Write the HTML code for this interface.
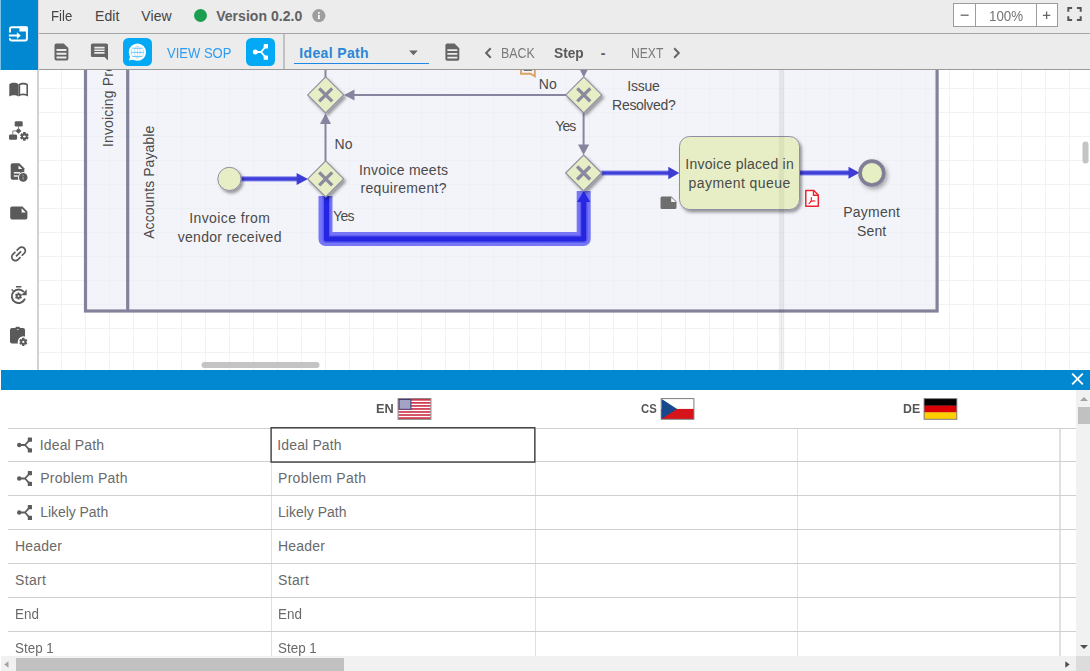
<!DOCTYPE html>
<html lang="en">
<head>
<meta charset="utf-8">
<title>Process Editor</title>
<style>
*{box-sizing:border-box}
html,body{margin:0;padding:0}
body{width:1090px;height:671px;overflow:hidden;position:relative;background:#fff;font-family:"Liberation Sans",sans-serif;font-size:14px;color:#4a4a4a}
.abs{position:absolute}
.t{position:absolute;white-space:nowrap;line-height:16px;height:16px}
#side{left:0;top:0;width:39px;height:370px;background:#fff;border-right:2px solid #d2d2d2}
#sidehead{left:0;top:0;width:37.500px;height:69.5px;background:#0288d1;border-left:1px solid #7cc3ea}
#topbar{left:39px;top:0;width:1051px;height:34px;background:#ececec;border-bottom:1px solid #a6a6a6}
#toolbar{left:39px;top:34px;width:1051px;height:36px;background:#ececec;border-bottom:1px solid #9a9a9a}
#canvas{left:39px;top:70px;width:1051px;height:300px;overflow:hidden;background-color:#fff;
 background-image:linear-gradient(to right,#f2f2f2 1px,transparent 1px),linear-gradient(to bottom,#f2f2f2 1px,transparent 1px);
 background-size:24px 24px;background-position:-2px -6px}
#bluebar{left:1px;top:370px;width:1089px;height:20px;background:#0288d1}
#table{left:0;top:390px;width:1076px;height:266px;overflow:hidden;background:#fff}
.row{position:absolute;left:8px;width:1068px;height:1px;background:#cfcfcf}
.col{position:absolute;top:38px;height:228px;width:1.5px;background:#e0e0e0}
.cell{position:absolute;white-space:nowrap;line-height:16px;height:16px;color:#666;font-size:14px}
.hd{position:absolute;white-space:nowrap;font-weight:bold;font-size:13px;line-height:16px;color:#555}
#vscroll{left:1076px;top:390px;width:14px;height:266px;background:#f1f1f1}
#hscroll{left:1px;top:656px;width:1075px;height:15px;background:#f1f1f1}
#corner{left:1076px;top:656px;width:14px;height:15px;background:#dcdcdc}
.btn{position:absolute;width:28.5px;height:28.3px;border-radius:5.5px;background:#03a9f4}
</style>
</head>
<body>
<!-- SIDEBAR -->
<div id="side" class="abs"></div>
<div id="sidehead" class="abs"></div>
<svg class="abs" style="left:0;top:0" width="38" height="370" viewBox="0 0 38 370">
<!-- active: open-in-tab icon -->
<g fill="none" stroke="#fff" stroke-width="2" stroke-linecap="butt">
<path d="M10 32.500V29a1.700 1.700 0 0 1 1.700-1.700H25.200a1.700 1.700 0 0 1 1.700 1.700V38.800a1.700 1.700 0 0 1-1.700 1.700H11.700A1.700 1.700 0 0 1 10 38.800V38.300"/>
</g>
<rect x="19.400" y="26.500" width="8.300" height="5" fill="#fff"/>
<path d="M8.900 34.600h8v-2.400l3.900 3.400-3.900 3.400v-2.400h-8z" fill="#fff"/>
<g fill="#5a5a5a" stroke="none">
<!-- book -->
<path d="M9.300 84.200C12 82.300 16 82.300 18.600 84.200V96.400C16 94.700 12 94.700 9.300 96.400Z"/>
<path d="M18.600 84.200C21.200 82.300 25.200 82.300 28 84.200V96.400C25.200 94.700 21.200 94.700 18.600 96.400Z M20.200 85.100V93.900C22.200 93.200 24.400 93.200 26.400 93.900V85.100C24.400 84.300 22.200 84.300 20.200 85.100Z" fill-rule="evenodd"/>
<!-- flow + gear -->
<rect x="14.700" y="121.200" width="8" height="5.400" rx="1.400"/>
<path d="M18.500 128l2.900 2.900-2.900 2.900-2.900-2.900z"/><path d="M18.500 126v3" stroke="#777" stroke-width=".8"/>
<rect x="9" y="134.600" width="8.100" height="5.200" rx="1.400"/>
<path d="M16 130.900H12.800V135" fill="none" stroke="#777" stroke-width=".9"/>
<path d="M25.880 139.120L25.560 140.750L23.240 140.750L22.920 139.120L22.780 139.040L21.220 139.580L20.050 137.560L21.300 136.480L21.300 136.320L20.050 135.240L21.220 133.220L22.780 133.760L22.920 133.680L23.240 132.050L25.560 132.050L25.880 133.680L26.020 133.760L27.580 133.220L28.750 135.240L27.500 136.320L27.500 136.480L28.750 137.560L27.580 139.580L26.020 139.040Z"/>
<ellipse cx="24.400" cy="136.400" rx="1.400" ry="1" fill="#fff"/>
<!-- doc + info -->
<path d="M12.500 163.200h6.800l5 5.100v9.700a1.800 1.800 0 0 1-1.800 1.800H12.500a1.800 1.800 0 0 1-1.800-1.800V165a1.800 1.800 0 0 1 1.800-1.800z"/>
<path d="M18.500 165.400v3.700h3.800z" fill="#fff"/>
<rect x="13.800" y="172.100" width="6.400" height="1.400" fill="#fff"/>
<rect x="13.800" y="175.300" width="4" height="1.400" fill="#fff"/>
<circle cx="23.200" cy="177.400" r="5.300" fill="#fff"/>
<circle cx="23.200" cy="177.400" r="4.300"/>
<rect x="22.600" y="176.700" width="1.200" height="3" fill="#9a9a9a"/>
<rect x="22.600" y="174.700" width="1.200" height="1.200" fill="#9a9a9a"/>
<!-- note -->
<path d="M12 206.500h10.500l4.900 4.900v6.400a1.800 1.800 0 0 1-1.800 1.800H12a1.800 1.800 0 0 1-1.800-1.800v-9.500a1.800 1.800 0 0 1 1.800-1.800z"/>
<path d="M21.600 208.200v4.300h4.300z" fill="#fff"/>
<!-- link -->
<path transform="translate(18.550 253.850) rotate(-45) scale(.89) translate(-12 -12)" d="M3.900 12c0-1.710 1.390-3.100 3.100-3.100h4V7H7c-2.760 0-5 2.240-5 5s2.240 5 5 5h4v-1.900H7c-1.710 0-3.100-1.390-3.100-3.100zM8 13h8v-2H8v2zm9-6h-4v1.900h4c1.710 0 3.100 1.390 3.100 3.100s-1.390 3.100-3.100 3.100h-4V17h4c2.760 0 5-2.240 5-5s-2.240-5-5-5z"/>
<!-- timer refresh cog -->
<rect x="15.900" y="286" width="5.500" height="1.600" rx=".5"/>
<path d="M23.770 291.960A6.750 6.750 0 1 0 24.940 298.610" fill="none" stroke="#5a5a5a" stroke-width="1.900"/>
<path d="M26.700 289.200V295.200H21.200Z"/>
<path d="M11.600 289.400l1.900 1.500" stroke="#5a5a5a" stroke-width="1.300"/>
<path d="M19.65 298.21L19.43 299.58L17.57 299.58L17.35 298.21L17.25 298.15L15.95 298.65L15.02 297.03L16.10 296.16L16.10 296.04L15.02 295.17L15.95 293.55L17.25 294.05L17.35 293.99L17.57 292.62L19.43 292.62L19.65 293.99L19.75 294.05L21.05 293.55L21.98 295.17L20.90 296.04L20.90 296.16L21.98 297.03L21.05 298.65L19.75 298.15Z"/>
<circle cx="18.500" cy="296.100" r=".9" fill="#fff"/>
<!-- clipboard cog -->
<rect x="10" y="327.900" width="15" height="15.500" rx="2"/>
<rect x="15.200" y="326.700" width="5" height="3" rx="1.500"/>
<ellipse cx="17.800" cy="329.500" rx="1" ry=".6" fill="#ddd"/>
<circle cx="23.300" cy="341.900" r="5.600" fill="#fff"/>
<path d="M24.68 344.45L24.39 345.96L22.21 345.96L21.92 344.45L21.78 344.37L20.33 344.87L19.24 342.99L20.40 341.98L20.40 341.82L19.24 340.81L20.33 338.93L21.78 339.43L21.92 339.35L22.21 337.84L24.39 337.84L24.68 339.35L24.82 339.43L26.27 338.93L27.36 340.81L26.20 341.82L26.20 341.98L27.36 342.99L26.27 344.87L24.82 344.37Z"/>
<circle cx="23.300" cy="341.900" r="1.100" fill="#fff"/>
</g>
</svg>

<!-- TOPBAR -->
<div id="topbar" class="abs"></div>
<div id="toolbar" class="abs"></div>
<div class="abs" style="left:194.200px;top:9px;width:13px;height:13px;border-radius:50%;background:#1b9e50"></div>
<svg class="abs" style="left:311.500px;top:9px" width="14" height="14" viewBox="0 0 14 14"><circle cx="6.800" cy="6.600" r="6.600" fill="#9e9e9e"/><rect x="6" y="5.800" width="1.700" height="4.300" fill="#fff"/><rect x="6" y="3" width="1.700" height="1.700" fill="#fff"/></svg>
<div class="abs" style="left:953px;top:2.500px;width:105px;height:24.500px;background:#fff;border:1.500px solid #9c9c9c"></div>
<div class="abs" style="left:974.500px;top:3px;width:1.500px;height:23.500px;background:#9c9c9c"></div>
<div class="abs" style="left:1035.500px;top:3px;width:1.500px;height:23.500px;background:#9c9c9c"></div>
<svg class="abs" style="left:953px;top:0" width="137" height="34" viewBox="953 0 137 34">
<path d="M960.600 15.200h8" stroke="#666" stroke-width="1.300"/>
<path d="M1042.900 15.300h7.400M1046.600 11.600v7.400" stroke="#666" stroke-width="1.300"/>
<path d="M1068.300 11.700v-3.800h3.800M1076.900 7.900h3.800v3.800M1080.700 16.200v3.800h-3.800M1072.100 20h-3.800v-3.800" fill="none" stroke="#555" stroke-width="2"/>
</svg>
<span class="t" style="left:51.0px;top:8.0px;font-size:14px;font-weight:normal;color:#444;letter-spacing:0.00px;transform:scaleX(0.940);transform-origin:0 0">File</span>
<span class="t" style="left:95.0px;top:8.0px;font-size:14px;font-weight:normal;color:#444;letter-spacing:0.06px">Edit</span>
<span class="t" style="left:141.3px;top:8.0px;font-size:14px;font-weight:normal;color:#444;letter-spacing:0.07px">View</span>
<span class="t" style="left:216.2px;top:8.0px;font-size:14px;font-weight:bold;color:#616161;letter-spacing:0.04px">Version 0.2.0</span>
<span class="t" style="left:988.9px;top:7.7px;font-size:14px;font-weight:normal;color:#757575;letter-spacing:0.00px;transform:scaleX(0.952);transform-origin:0 0">100%</span>

<span class="t" style="left:166.8px;top:44.8px;font-size:14px;font-weight:normal;color:#2e9cf2;letter-spacing:0.00px;transform:scaleX(0.930);transform-origin:0 0">VIEW SOP</span>
<span class="t" style="left:299.3px;top:44.6px;font-size:14px;font-weight:bold;color:#2a87d6;letter-spacing:0.36px">Ideal Path</span>
<span class="t" style="left:501.2px;top:44.7px;font-size:14px;font-weight:normal;color:#7a7a7a;letter-spacing:0.00px;transform:scaleX(0.887);transform-origin:0 0">BACK</span>
<span class="t" style="left:553.8px;top:44.7px;font-size:14px;font-weight:bold;color:#5a5a5a;letter-spacing:0.00px;transform:scaleX(0.979);transform-origin:0 0">Step</span>
<span class="t" style="left:600.8px;top:44.7px;font-size:14px;font-weight:bold;color:#5a5a5a;letter-spacing:0.00px">-</span>
<span class="t" style="left:630.8px;top:44.7px;font-size:14px;font-weight:normal;color:#7a7a7a;letter-spacing:0.00px;transform:scaleX(0.865);transform-origin:0 0">NEXT</span>
<div class="btn" style="left:123.200px;top:37.800px"></div>
<div class="btn" style="left:246.300px;top:37.800px"></div>
<div class="abs" style="left:283px;top:34px;width:2px;height:35px;background:#c2c2c2"></div>
<div class="abs" style="left:293.500px;top:62.700px;width:135px;height:1.500px;background:#1e88e5"></div>
<svg class="abs" style="left:38px;top:34px" width="700" height="36" viewBox="38 34 700 36">
<defs><g id="docic"><path d="M1.800 0h7.400l4.700 4.700v10.700a1.800 1.800 0 0 1-1.800 1.800H1.800a1.800 1.800 0 0 1-1.800-1.800V1.800a1.800 1.800 0 0 1 1.800-1.800z" fill="#666"/><path d="M2 6.600h9.900M2 10.400h9.900M2 14.100h9.900" stroke="#ececec" stroke-width="1.900"/></g></defs>
<use href="#docic" x="54.500" y="43.400"/>
<use href="#docic" x="445.400" y="43.500"/>
<path transform="translate(89.200 41.700) scale(.855)" fill="#666" d="M21.990 4c0-1.100-.890-2-1.990-2H4c-1.100 0-2 .9-2 2v12c0 1.100.9 2 2 2h14l4 4-.01-18zM18 14H6v-2h12v2zm0-3H6V9h12v2zm0-3H6V6h12v2z"/>
<!-- globe chat -->
<circle cx="137.400" cy="52.200" r="8.600" fill="#fff"/>
<path d="M130.200 56.500l-1.300 3.900 5.400-.9z" fill="#fff"/>
<g fill="none" stroke="#9bdafa" stroke-width=".75">
<ellipse cx="137.400" cy="52.200" rx="2.800" ry="6.200"/>
<path d="M137.400 46v12.400"/>
<path d="M133.200 47.300c-2.600 2.800-2.600 7 0 9.800M141.600 47.300c2.600 2.800 2.600 7 0 9.800"/>
</g>
<path d="M131.400 52.450h12M132.600 48.300h9.600M132.600 56.500h9.600" fill="none" stroke="#5cc4f7" stroke-width=".9"/>
<!-- share -->
<path d="M265.850 46.250L261.100 52L265.850 57.700M255.350 52H261.100" stroke="#fff" stroke-width="1.800" fill="none" stroke-linejoin="round"/>
<circle cx="255.350" cy="52" r="2.500" fill="#fff"/>
<rect x="263.700" y="44.100" width="4.300" height="4.300" rx=".6" fill="#fff"/>
<rect x="263.700" y="55.550" width="4.300" height="4.300" rx=".6" fill="#fff"/>
<!-- caret -->
<path d="M409.100 50.600h8.700l-4.350 4.700z" fill="#666"/>
<!-- chevrons -->
<path d="M490.700 48.200l-4.600 4.800 4.600 4.800" fill="none" stroke="#666" stroke-width="2"/>
<path d="M674.200 48.200l4.600 4.800-4.600 4.800" fill="none" stroke="#666" stroke-width="2"/>
</svg>

<!-- CANVAS -->
<div id="canvas" class="abs">
<svg id="diagram" class="abs" style="left:-39px;top:-70px" width="1090" height="671" viewBox="0 0 1090 671" font-family="Liberation Sans, sans-serif" font-size="14" fill="#4a4a4a">
<defs>
<filter id="sh" x="-30%" y="-30%" width="170%" height="170%"><feDropShadow dx="2" dy="2.5" stdDeviation="1.6" flood-color="#000" flood-opacity=".38"/></filter>
<filter id="sh2" x="-40%" y="-40%" width="190%" height="190%"><feDropShadow dx="2" dy="2.500" stdDeviation="2.200" flood-color="#000" flood-opacity=".32"/></filter>
<g id="gw"><path d="M0 -18L18 0L0 18L-18 0Z" fill="#e7eec5" stroke="#8f8fa3" stroke-width="1.2" filter="url(#sh)"/><path d="M-6.500 -6.500L6.500 6.500M6.500 -6.500L-6.500 6.500" stroke="#8a8a9e" stroke-width="3.300" fill="none"/></g>
</defs>
<!-- pool -->
<rect x="85.500" y="-120" width="851.600" height="431" fill="#eeeff6" fill-opacity=".7" stroke="#82829a" stroke-width="3.200"/>
<line x1="127.700" y1="60" x2="127.700" y2="311" stroke="#82829a" stroke-width="3.200"/>
<!-- splitter band -->
<rect x="778.700" y="70" width="5.600" height="300" fill="#000" fill-opacity=".05"/>
<line x1="780" y1="70" x2="780" y2="370" stroke="#000" stroke-opacity=".015" stroke-width="1"/>
<line x1="783.500" y1="70" x2="783.500" y2="370" stroke="#000" stroke-opacity=".03" stroke-width="1"/>
<!-- lane labels -->
<text transform="translate(112.600,147.100) rotate(-90)" textLength="112.500" lengthAdjust="spacing">Invoicing Process</text>
<text transform="translate(154.400,238.800) rotate(-90)" textLength="113" lengthAdjust="spacing">Accounts Payable</text>
<!-- thick ideal path -->
<path d="M325.500 196V239H583.700V191" fill="none" stroke="#7676f7" stroke-width="14" stroke-linejoin="round"/>
<path d="M326.300 196V239H583.700V200" fill="none" stroke="#5c5cf1" stroke-width="8" stroke-linejoin="round"/>
<path d="M326.500 196V239H583.700V200" fill="none" stroke="#2424e1" stroke-width="5" stroke-linejoin="round"/>
<path d="M583.700 191L590.300 202H577.100Z" fill="#2828e2"/>
<!-- grey flows -->
<g stroke="#8585a0" stroke-width="2" fill="none">
<line x1="325.500" y1="60" x2="325.500" y2="78"/>
<line x1="325.500" y1="161.500" x2="325.500" y2="123"/>
<line x1="566" y1="95" x2="354" y2="95"/>
<line x1="583.600" y1="112" x2="583.600" y2="145"/>
</g>
<g fill="#8585a0">
<path d="M325.500 113.500L331 124H320Z"/>
<path d="M344 95L354.500 89.500V100.500Z"/>
<path d="M583.600 155L578 144.500H589.200Z"/>
<path d="M583.800 77.500L579 68H588.600Z"/>
</g>
<!-- blue flows -->
<g stroke="#8a8aee" stroke-width="5.200" fill="none">
<line x1="241.500" y1="178.900" x2="298" y2="178.900"/>
<line x1="601.500" y1="173" x2="670" y2="173"/>
<line x1="800" y1="172.800" x2="850" y2="172.800"/>
</g>
<g stroke="#3e3ed8" stroke-width="3.200" fill="none">
<line x1="241.500" y1="178.900" x2="298" y2="178.900"/>
<line x1="601.500" y1="173" x2="670" y2="173"/>
<line x1="800" y1="172.800" x2="850" y2="172.800"/>
</g>
<g fill="#3d3dd6">
<path d="M308 178.900L296.600 172.900V184.900Z"/>
<path d="M679.300 173L668.300 166.800V179.200Z"/>
<path d="M859.500 172.800L848.500 166.800V178.800Z"/>
</g>
<!-- events -->
<circle cx="229.400" cy="178.900" r="11.600" fill="#e7eec5" stroke="#8f8fa3" stroke-width="1" filter="url(#sh)"/>
<circle cx="871.900" cy="173.100" r="11.900" fill="#e6eec4" stroke="#7f7f95" stroke-width="3.700" filter="url(#sh2)"/>
<!-- gateways -->
<use href="#gw" x="325.700" y="94.900"/>
<use href="#gw" x="325.700" y="178.900"/>
<use href="#gw" x="583.800" y="94.900"/>
<use href="#gw" x="583.600" y="173"/>
<!-- task -->
<rect x="679.500" y="136.500" width="120" height="73" rx="10" fill="#e7eec5" stroke="#8f8fa3" stroke-width="1" filter="url(#sh)"/>
<!-- splitter band over task -->
<rect x="778.700" y="136" width="5.600" height="74" fill="#000" fill-opacity=".05"/>
<!-- labels -->
<text x="189.200" y="223" textLength="80.800">Invoice from</text>
<text x="177.700" y="241.900" textLength="103.800">vendor received</text>
<text x="334.500" y="148.900" textLength="18.100">No</text>
<text x="333.100" y="220.800" textLength="21.300">Yes</text>
<text x="358.900" y="175" textLength="89.100">Invoice meets</text>
<text x="360.400" y="192.900" textLength="86.200">requirement?</text>
<text x="538.800" y="88.800" textLength="18">No</text>
<text x="627.300" y="90.600" textLength="32.600">Issue</text>
<text x="612.100" y="109.800" textLength="63.700">Resolved?</text>
<text x="555.300" y="130.700" textLength="20.900">Yes</text>
<text x="685.300" y="169.400" textLength="108.500">Invoice placed in</text>
<text x="688.600" y="188" textLength="101.700">payment queue</text>
<text x="843.200" y="217.300" textLength="56.800">Payment</text>
<text x="857.100" y="235.700" textLength="29.100">Sent</text>
<!-- note icon -->
<path d="M662 196.500h9.500l5 5v6a1.500 1.500 0 0 1 -1.500 1.500h-13a1.500 1.500 0 0 1 -1.500 -1.500v-9.500a1.500 1.500 0 0 1 1.500 -1.500z" fill="#6e6e6e"/>
<path d="M671.200 197.200v4.800h4.800z" fill="#f3f4f9"/>
<!-- pdf icon -->
<path d="M805.800 190.500h8l4.500 4.500v11.300h-12.500z" fill="#fff" stroke="#ea2530" stroke-width="1.500" stroke-linejoin="round"/>
<path d="M813.500 190.800v4.500h4.500" fill="none" stroke="#ea2530" stroke-width="1.400"/>
<path d="M811.300 197.600c.5 2.600-.6 4.600-2.300 6M810.600 201.500c1.500-.5 3-.7 4.400-.5" fill="none" stroke="#ea2530" stroke-width="1.200" stroke-linecap="round"/>
<!-- orange comment icon -->
<path d="M521 62V73.700H530.500L534.800 76.300V62" fill="none" stroke="#dca263" stroke-width="1.900"/>
<line x1="523.700" y1="70.300" x2="532" y2="70.300" stroke="#666" stroke-width="1.200"/>
<!-- canvas scrollbars -->
<rect x="201.500" y="362" width="118" height="6" rx="3" fill="#c4c4c4"/>
<rect x="1082.500" y="141.500" width="6" height="22" rx="3" fill="#c4c4c4"/>
</svg>
</div>
<!-- PANEL -->
<div id="bluebar" class="abs"></div>
<div id="table" class="abs">
<div class="col" style="left:270.500px"></div>
<div class="col" style="left:534.500px"></div>
<div class="col" style="left:796.800px"></div>
<div class="col" style="left:1059.300px"></div>
<div class="row" style="top:38px"></div>
<div class="row" style="top:71px"></div>
<div class="row" style="top:105px"></div>
<div class="row" style="top:139px"></div>
<div class="row" style="top:173px"></div>
<div class="row" style="top:207px"></div>
<div class="row" style="top:241px"></div>
</div>
<span class="t" style="left:375.7px;top:401.3px;font-size:13.5px;font-weight:bold;color:#555;letter-spacing:0.00px;transform:scaleX(0.943);transform-origin:0 0">EN</span>
<span class="t" style="left:641.1px;top:401.3px;font-size:13.5px;font-weight:bold;color:#555;letter-spacing:0.00px;transform:scaleX(0.837);transform-origin:0 0">CS</span>
<span class="t" style="left:902.8px;top:401.3px;font-size:13.5px;font-weight:bold;color:#555;letter-spacing:0.00px;transform:scaleX(0.911);transform-origin:0 0">DE</span>
<span class="t" style="left:39.8px;top:436.8px;font-size:14px;font-weight:normal;color:#6a6a6a;letter-spacing:0.13px">Ideal Path</span>
<span class="t" style="left:40.2px;top:470.1px;font-size:14px;font-weight:normal;color:#6a6a6a;letter-spacing:0.22px">Problem Path</span>
<span class="t" style="left:40.2px;top:504.1px;font-size:14px;font-weight:normal;color:#6a6a6a;letter-spacing:-0.05px">Likely Path</span>
<span class="t" style="left:15.0px;top:538.1px;font-size:14px;font-weight:normal;color:#6a6a6a;letter-spacing:0.22px">Header</span>
<span class="t" style="left:15.0px;top:572.1px;font-size:14px;font-weight:normal;color:#6a6a6a;letter-spacing:0.36px">Start</span>
<span class="t" style="left:15.0px;top:606.1px;font-size:14px;font-weight:normal;color:#6a6a6a;letter-spacing:0.00px;transform:scaleX(0.959);transform-origin:0 0">End</span>
<span class="t" style="left:14.6px;top:639.9px;font-size:14px;font-weight:normal;color:#6a6a6a;letter-spacing:0.00px;transform:scaleX(0.958);transform-origin:0 0">Step 1</span>
<span class="t" style="left:277.3px;top:436.8px;font-size:14px;font-weight:normal;color:#6a6a6a;letter-spacing:0.14px">Ideal Path</span>
<span class="t" style="left:278.0px;top:470.1px;font-size:14px;font-weight:normal;color:#6a6a6a;letter-spacing:0.29px">Problem Path</span>
<span class="t" style="left:278.0px;top:504.1px;font-size:14px;font-weight:normal;color:#6a6a6a;letter-spacing:0.00px">Likely Path</span>
<span class="t" style="left:278.0px;top:538.1px;font-size:14px;font-weight:normal;color:#6a6a6a;letter-spacing:0.22px">Header</span>
<span class="t" style="left:278.0px;top:572.1px;font-size:14px;font-weight:normal;color:#6a6a6a;letter-spacing:0.36px">Start</span>
<span class="t" style="left:278.0px;top:606.1px;font-size:14px;font-weight:normal;color:#6a6a6a;letter-spacing:0.00px;transform:scaleX(0.959);transform-origin:0 0">End</span>
<span class="t" style="left:277.6px;top:639.9px;font-size:14px;font-weight:normal;color:#6a6a6a;letter-spacing:0.00px;transform:scaleX(0.958);transform-origin:0 0">Step 1</span>
<svg class="abs" style="left:0;top:390px" width="1076" height="266" viewBox="0 390 1076 266">
<defs><g id="pathic" fill="#5c5c5c"><path d="M13 2.300L8.100 7.700L13 13M2.300 7.700H8.100" fill="none" stroke="#5c5c5c" stroke-width="1.800" stroke-linejoin="round"/><circle cx="2.300" cy="7.700" r="2.200"/><rect x="10.900" y=".2" width="4.200" height="4.200" rx=".5"/><rect x="10.900" y="10.900" width="4.200" height="4.200" rx=".5"/></g></defs>
<rect x="271.100" y="427.700" width="263.700" height="34.400" fill="none" stroke="#484848" stroke-width="1.450"/>
<use href="#pathic" x="16.900" y="437.300"/>
<use href="#pathic" x="16.900" y="470.800"/>
<use href="#pathic" x="16.900" y="504.800"/>
<!-- US flag -->
<g>
<rect x="397.600" y="398.100" width="33.800" height="21.700" fill="#7d7d7d"/>
<rect x="398.600" y="399.100" width="31.800" height="19.700" fill="#fff"/>
<g fill="#c8203a"><rect x="398.600" y="399.100" width="31.800" height="1.520"/><rect x="398.600" y="402.130" width="31.800" height="1.520"/><rect x="398.600" y="405.160" width="31.800" height="1.520"/><rect x="398.600" y="408.190" width="31.800" height="1.520"/><rect x="398.600" y="411.220" width="31.800" height="1.520"/><rect x="398.600" y="414.250" width="31.800" height="1.520"/><rect x="398.600" y="417.280" width="31.800" height="1.520"/></g>
<rect x="398.600" y="399.100" width="12.800" height="10.600" fill="#3c3b78"/>
<rect x="399.600" y="400" width="10.800" height="8.800" fill="#a3a3c6"/>
</g>
<!-- CZ flag -->
<g>
<rect x="660.700" y="398.100" width="33.700" height="21.700" fill="#7d7d7d"/>
<rect x="661.700" y="399.100" width="31.700" height="9.850" fill="#fff"/>
<rect x="661.700" y="408.950" width="31.700" height="9.850" fill="#d7141a"/>
<path d="M661.700 399.100L677.100 408.950L661.700 418.800Z" fill="#17488c"/>
</g>
<!-- DE flag -->
<g>
<rect x="923.600" y="398.100" width="33.700" height="21.700" fill="#7d7d7d"/>
<rect x="924.600" y="399.100" width="31.700" height="6.600" fill="#000"/>
<rect x="924.600" y="405.700" width="31.700" height="6.600" fill="#dd0000"/>
<rect x="924.600" y="412.300" width="31.700" height="6.500" fill="#ffce00"/>
</g>
</svg>
<!-- close X -->
<svg class="abs" style="left:1068px;top:370px" width="20" height="20" viewBox="1068 370 20 20"><path d="M1072.200 373.700l10.600 10.600M1082.800 373.700l-10.600 10.600" stroke="#fff" stroke-width="1.900" fill="none"/></svg>
<div id="vscroll" class="abs"><div class="abs" style="left:1.700px;top:17.200px;width:12.300px;height:16.600px;background:#c1c1c1"></div>
<svg class="abs" style="left:0;top:0" width="14" height="266" viewBox="1076 390 14 266"><path d="M1080 401l4-3.900 4 3.900z" fill="#a3a3a3"/><path d="M1080 645l4 3.900 4-3.900z" fill="#505050"/></svg></div>
<div id="hscroll" class="abs"><div class="abs" style="left:15px;top:2px;width:327.500px;height:13px;background:#c1c1c1"></div>
<svg class="abs" style="left:0;top:0" width="1075" height="15" viewBox="1 656 1075 15"><path d="M8.500 661.300l-4.300 3.200 4.300 3.200z" fill="#a3a3a3"/><path d="M1065.300 661.300l4.400 3.200-4.400 3.200z" fill="#505050"/></svg></div>
<div id="corner" class="abs"></div>

</body>
</html>
